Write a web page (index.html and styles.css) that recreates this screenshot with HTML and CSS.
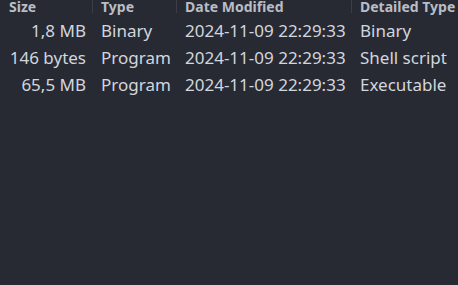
FILE: index.html
```html
<!DOCTYPE html>
<html lang="en">
<head>
  <meta charset="UTF-8">
  <title>Files</title>
  <link rel="stylesheet" href="styles.css">
</head>
<body>
  <div class="list">
    <div class="row head">
      <div class="cell size">Size</div>
      <div class="cell">Type</div>
      <div class="cell">Date Modified</div>
      <div class="cell">Detailed Type</div>
    </div>
    <div class="row">
      <div class="cell num">1,8 MB</div>
      <div class="cell">Binary</div>
      <div class="cell">2024-11-09 22:29:33</div>
      <div class="cell">Binary</div>
    </div>
    <div class="row">
      <div class="cell num">146 bytes</div>
      <div class="cell">Program</div>
      <div class="cell">2024-11-09 22:29:33</div>
      <div class="cell">Shell script</div>
    </div>
    <div class="row">
      <div class="cell num">65,5 MB</div>
      <div class="cell">Program</div>
      <div class="cell">2024-11-09 22:29:33</div>
      <div class="cell">Executable</div>
    </div>
  </div>
</body>
</html>
```

FILE: styles.css
```css
body {
  margin: 0;
  background: #272a33;
  font-family: "Noto Sans", sans-serif;
  color: #d2d6de;
  height: 285px;
  overflow: hidden;
}
.list {
  width: 458px;
}
.row {
  display: grid;
  grid-template-columns: 93px 84px 175px 1fr;
  height: 27px;
  font-size: 17px;
  line-height: 27px;
  white-space: nowrap;
}
.cell {
  padding: 0 7px 0 8px;
  overflow: hidden;
}
.num {
  text-align: right;
}
.head {
  height: 17px;
  font-size: 14px;
  font-weight: bold;
  color: #b9bdc6;
  align-items: start;
}
.head .cell {
  height: 11px;
  line-height: 10px;
  padding-top: 2px;
  border-right: 1px solid #3b3e48;
  overflow: visible;
}
.head .cell:last-child {
  border-right: none;
}
.head .size {
  padding-left: 9px;
}
```
